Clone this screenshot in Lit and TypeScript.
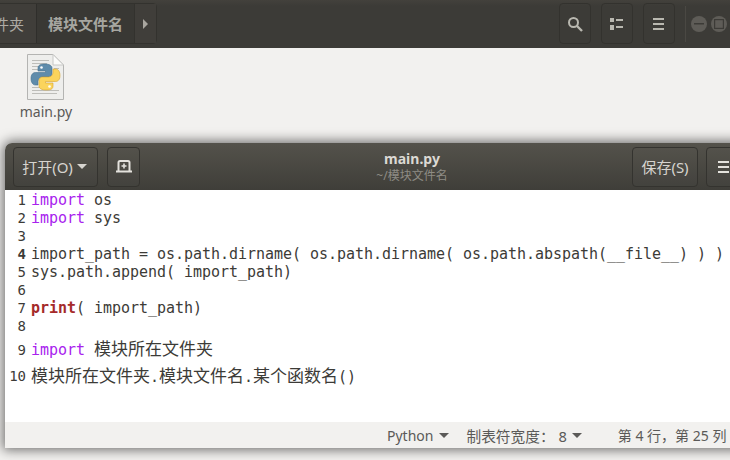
import { LitElement, html, css } from "lit";
import { customElement } from "lit/decorators.js";

@customElement("app-root")
export class AppRoot extends LitElement {
  static styles = css`
    :host { display: block; width: 730px; height: 460px; overflow: hidden; position: relative; background: #f2f1ef;
      font-family: "Noto Sans", "Noto Sans CJK SC", sans-serif; }
    .top { height: 48px; background: linear-gradient(#43413c, #3c3b37 6px); display: flex; align-items: flex-start; box-sizing: border-box; padding-top: 3px; }
    .crumbs { display: flex; height: 41px; margin-left: -20px; width: 177px; border: 1px solid #33322e; border-radius: 4px; box-sizing: border-box; flex: none; }
    .crumb { display: flex; align-items: center; color: #a9a69f; font-size: 15px; }
    .crumb.prev { width: 56px; justify-content: flex-end; padding-right: 12px; box-sizing: border-box; border-right: 1px solid #2f2e2b; color: #aeaba4; background:#403e3a; }
    .crumb.cur { width: 98px; justify-content: center; font-weight: 700; background: #393834; color: #a6a6a0; border-right: 1px solid #33322e; box-sizing: border-box; }
    .crumb.arrow { flex: 1; justify-content: center; background: #403e3a; }
    .tri-r { width: 0; height: 0; border-left: 5px solid #a9a69f; border-top: 5px solid transparent; border-bottom: 5px solid transparent; }
    .tools { margin-left: auto; display: flex; align-items: center; height: 41px; padding-right: 3px; }
    .tbtn { width: 32px; height: 41px; border: 1px solid #33322e; border-radius: 4px; box-sizing: border-box; display: flex; align-items: center; justify-content: center; margin-right: 10px; }
    .tools svg { display: block; }
    .sep { width: 1px; height: 36px; background: #4a4843; margin-right: 5px; }
    .wbtn { width: 16px; height: 16px; border-radius: 50%; background: #5e5c57; display: flex; align-items: center; justify-content: center; }
    .wbtn + .wbtn { margin-left: 4px; }
    .files { height: 95px; box-sizing: border-box; display: flex; flex-direction: column; align-items: flex-start; padding: 6px 0 0 19px; }
    .ficon { margin-left: 8px; display: block; }
    .fname { font-size: 14px; color: #5b5a58; line-height: 18px; margin-top: 3px; width: 54px; text-align: center; }
    .win { margin-left: 5px; width: 760px; height: 305px; border-radius: 7px 7px 0 0; overflow: hidden; display: flex; flex-direction: column; box-shadow: 0 0 12px 2px rgba(0,0,0,.55); }
    .head { height: 47px; flex: none; background: linear-gradient(#54524b, #3f3e39); display: flex; align-items: center; box-sizing: border-box; padding-left: 8px; }
    .hbtn { height: 40px; flex: none; border: 1px solid #34332f; border-radius: 4px; box-sizing: border-box; display: flex; align-items: center; justify-content: center; color: #d6d4cf; font-size: 15px; background: rgba(255,255,255,.015); }
    .open { width: 85px; gap: 4px; padding-right: 2px; }
    .pin { width: 33px; margin-left: 9px; }
    .tri-d { width: 0; height: 0; border-top: 5px solid #d6d4cf; border-left: 5px solid transparent; border-right: 5px solid transparent; }
    .title { display: flex; flex-direction: column; align-items: center; margin-left: 222px; width: 100px; flex: none; }
    .t1 { font-size: 14px; font-weight: 700; color: #dbd9d4; line-height: 18px; }
    .t2 { font-size: 12px; color: #8e8c85; line-height: 17px; margin-top: -1px; }
    .save { width: 66px; margin-left: 170px; }
    .menu { width: 40px; margin-left: 8px; justify-content: flex-start; padding-left: 11px; }
    .code { flex: 1; background: #fff; box-sizing: border-box; padding-top: 1px; font: 15px/18px "DejaVu Sans Mono", "Noto Sans CJK SC", monospace; color: #3c3b37; letter-spacing: -0.03px; }
    .ln { display: flex; height: 18px; white-space: pre; }
    .ln.t9 { height: 24px; align-items: flex-end; }
    .ln.t10 { height: 29px; align-items: center; padding-top: 2px; }
    .num { width: 21px; text-align: right; margin-right: 5px; color: #3c3b37; flex: none; font-size: 14px; }
    .num.cur { font-weight: 700; }
    .kw { color: #a822ee; }
    .fn { color: #a52a2a; font-weight: 700; }
    .cjk { font-family: "Noto Sans CJK SC", sans-serif; font-size: 17px; letter-spacing: 0; line-height: 18px; }
    .status { height: 26px; flex: none; background: #f2f1ef; display: flex; align-items: center; font-size: 14px; color: #5b5a58; box-sizing: border-box; padding-left: 382px; white-space: pre; }
    .tri-s { width: 0; height: 0; border-top: 5px solid #5b5a58; border-left: 5px solid transparent; border-right: 5px solid transparent; display: inline-block; flex: none; }
    .st1 { margin-right: 6px; }
    .st2 { margin-left: 17px; margin-right: 5px; font-size: 14.7px; }
    .st3 { margin-left: 36px; font-size: 14px; }
  `;

  pyIcon() {
    return html`<svg class="ficon" width="37" height="46" viewBox="0 0 37 46">
      <path d="M.5.5H26L36.500 11V45.500H.5Z" fill="#eeeeec" stroke="#b4b4b2"/>
      <path d="M26 .5V11H36.500Z" fill="#fbfbfa" stroke="#c8c8c6"/>
      <g stroke="#bdbdb9" stroke-width="1">
        <path d="M5 6.500H22M5 9.500H20M5 12.500H22M5 15.500H12M5 33.500H14M5 36.500H32M5 39.500H30M27 14.500H32"/>
      </g>
      <path d="M18 10c-5 0-7 1.500-7 4v3h7.500v1.500H8.500c-3 0-4.500 2.500-4.500 6s1.500 6.500 4.500 6.500h2.500v-3.500c0-2.500 2-4.500 4.500-4.500h6c2 0 3.500-1.500 3.500-3.500v-5.500c0-2.500-3-4-7-4z" fill="#5f8cab" stroke="#45718f" stroke-width=".6"/>
      <path d="M19 36c5 0 7-1 7-4v-3h-7.500v-1.500h10c3 0 4.500-2.500 4.500-6s-1.500-6.500-4.500-6.500H26v3.500c0 2.500-2 4.500-4.500 4.500h-6c-2 0-3.500 1.500-3.500 3.500V32c0 2.500 3 4 7 4z" fill="#fbd45c" stroke="#d9a52e" stroke-width=".6"/>
      <circle cx="14.500" cy="13.500" r="1.300" fill="#fff"/>
      <circle cx="22.500" cy="32.500" r="1.300" fill="#fff"/>
    </svg>`;
  }

  render() {
    const lines = [
      html`<span class="kw">import</span> os`,
      html`<span class="kw">import</span> sys`,
      html``,
      html`import_path = os.path.dirname( os.path.dirname( os.path.abspath(__file__) ) )`,
      html`sys.path.append( import_path)`,
      html``,
      html`<span class="fn">print</span>( import_path)`,
      html``,
    ];
    return html`
      <div class="top">
        <div class="crumbs">
          <div class="crumb prev">件夹</div>
          <div class="crumb cur">模块文件名</div>
          <div class="crumb arrow"><div class="tri-r"></div></div>
        </div>
        <div class="tools">
          <div class="tbtn"><svg width="16" height="16" viewBox="0 0 16 16" fill="none" stroke="#b9b8b0" stroke-width="2"><circle cx="6.500" cy="6.500" r="4.500"/><path d="M10 10l5 5" stroke-width="2.400"/></svg></div>
          <div class="tbtn"><svg width="14" height="12" viewBox="0 0 14 12" fill="#b9b8b0"><rect x="0" y="0" width="4" height="4"/><rect x="0" y="7" width="4" height="5"/><rect x="6" y="1" width="7" height="2"/><rect x="6" y="8" width="7" height="2"/></svg></div>
          <div class="tbtn"><svg width="12" height="12" viewBox="0 0 12 12" fill="#b9b8b0"><rect y="0" width="11" height="2"/><rect y="5" width="11" height="2"/><rect y="10" width="11" height="2"/></svg></div>
          <div class="sep"></div>
          <div class="wbtn"><svg width="10" height="10" viewBox="0 0 10 10"><rect y="4" width="10" height="1.500" fill="#3c3b37"/></svg></div>
          <div class="wbtn"><svg width="10" height="10" viewBox="0 0 10 10" fill="none" stroke="#3c3b37" stroke-width="1.200"><rect x=".6" y=".6" width="8.800" height="8.800"/></svg></div>
        </div>
      </div>
      <div class="files">
        ${this.pyIcon()}
        <div class="fname">main.py</div>
      </div>
      <div class="win">
        <div class="head">
          <div class="hbtn open">打开(O)<span class="tri-d"></span></div>
          <div class="hbtn pin"><svg width="16" height="13" viewBox="0 0 16 13" fill="none" stroke="#e4e2dd" stroke-width="2"><path d="M2.500 11V2.500q0-1.500 1.500-1.500h8q1.500 0 1.500 1.500V11"/><path d="M0 11.500h16"/><path d="M8 3.500v5M5.500 6h5" stroke-width="1.600"/></svg></div>
          <div class="title"><div class="t1">main.py</div><div class="t2">~/模块文件名</div></div>
          <div class="hbtn save">保存(S)</div>
          <div class="hbtn menu"><svg width="12" height="12" viewBox="0 0 12 12" fill="#e4e2dd"><rect y="0" width="11" height="2"/><rect y="5" width="11" height="2"/><rect y="10" width="11" height="2"/></svg></div>
        </div>
        <div class="code">
          ${lines.map((l, i) => html`<div class="ln"><span class="num ${i === 3 ? "cur" : ""}">${i + 1}</span><span>${l}</span></div>`)}
          <div class="ln t9"><span class="num">9</span><span><span class="kw">import</span> <span class="cjk">模块所在文件夹</span></span></div>
          <div class="ln t10"><span class="num">10</span><span><span class="cjk">模块所在文件夹</span>.<span class="cjk">模块文件名</span>.<span class="cjk">某个函数名</span>()</span></div>
        </div>
        <div class="status">
          <span class="st1">Python</span><span class="tri-s"></span>
          <span class="st2">制表符宽度： 8</span><span class="tri-s"></span>
          <span class="st3">第 4 行，第 25 列</span>
        </div>
      </div>
    `;
  }
}
